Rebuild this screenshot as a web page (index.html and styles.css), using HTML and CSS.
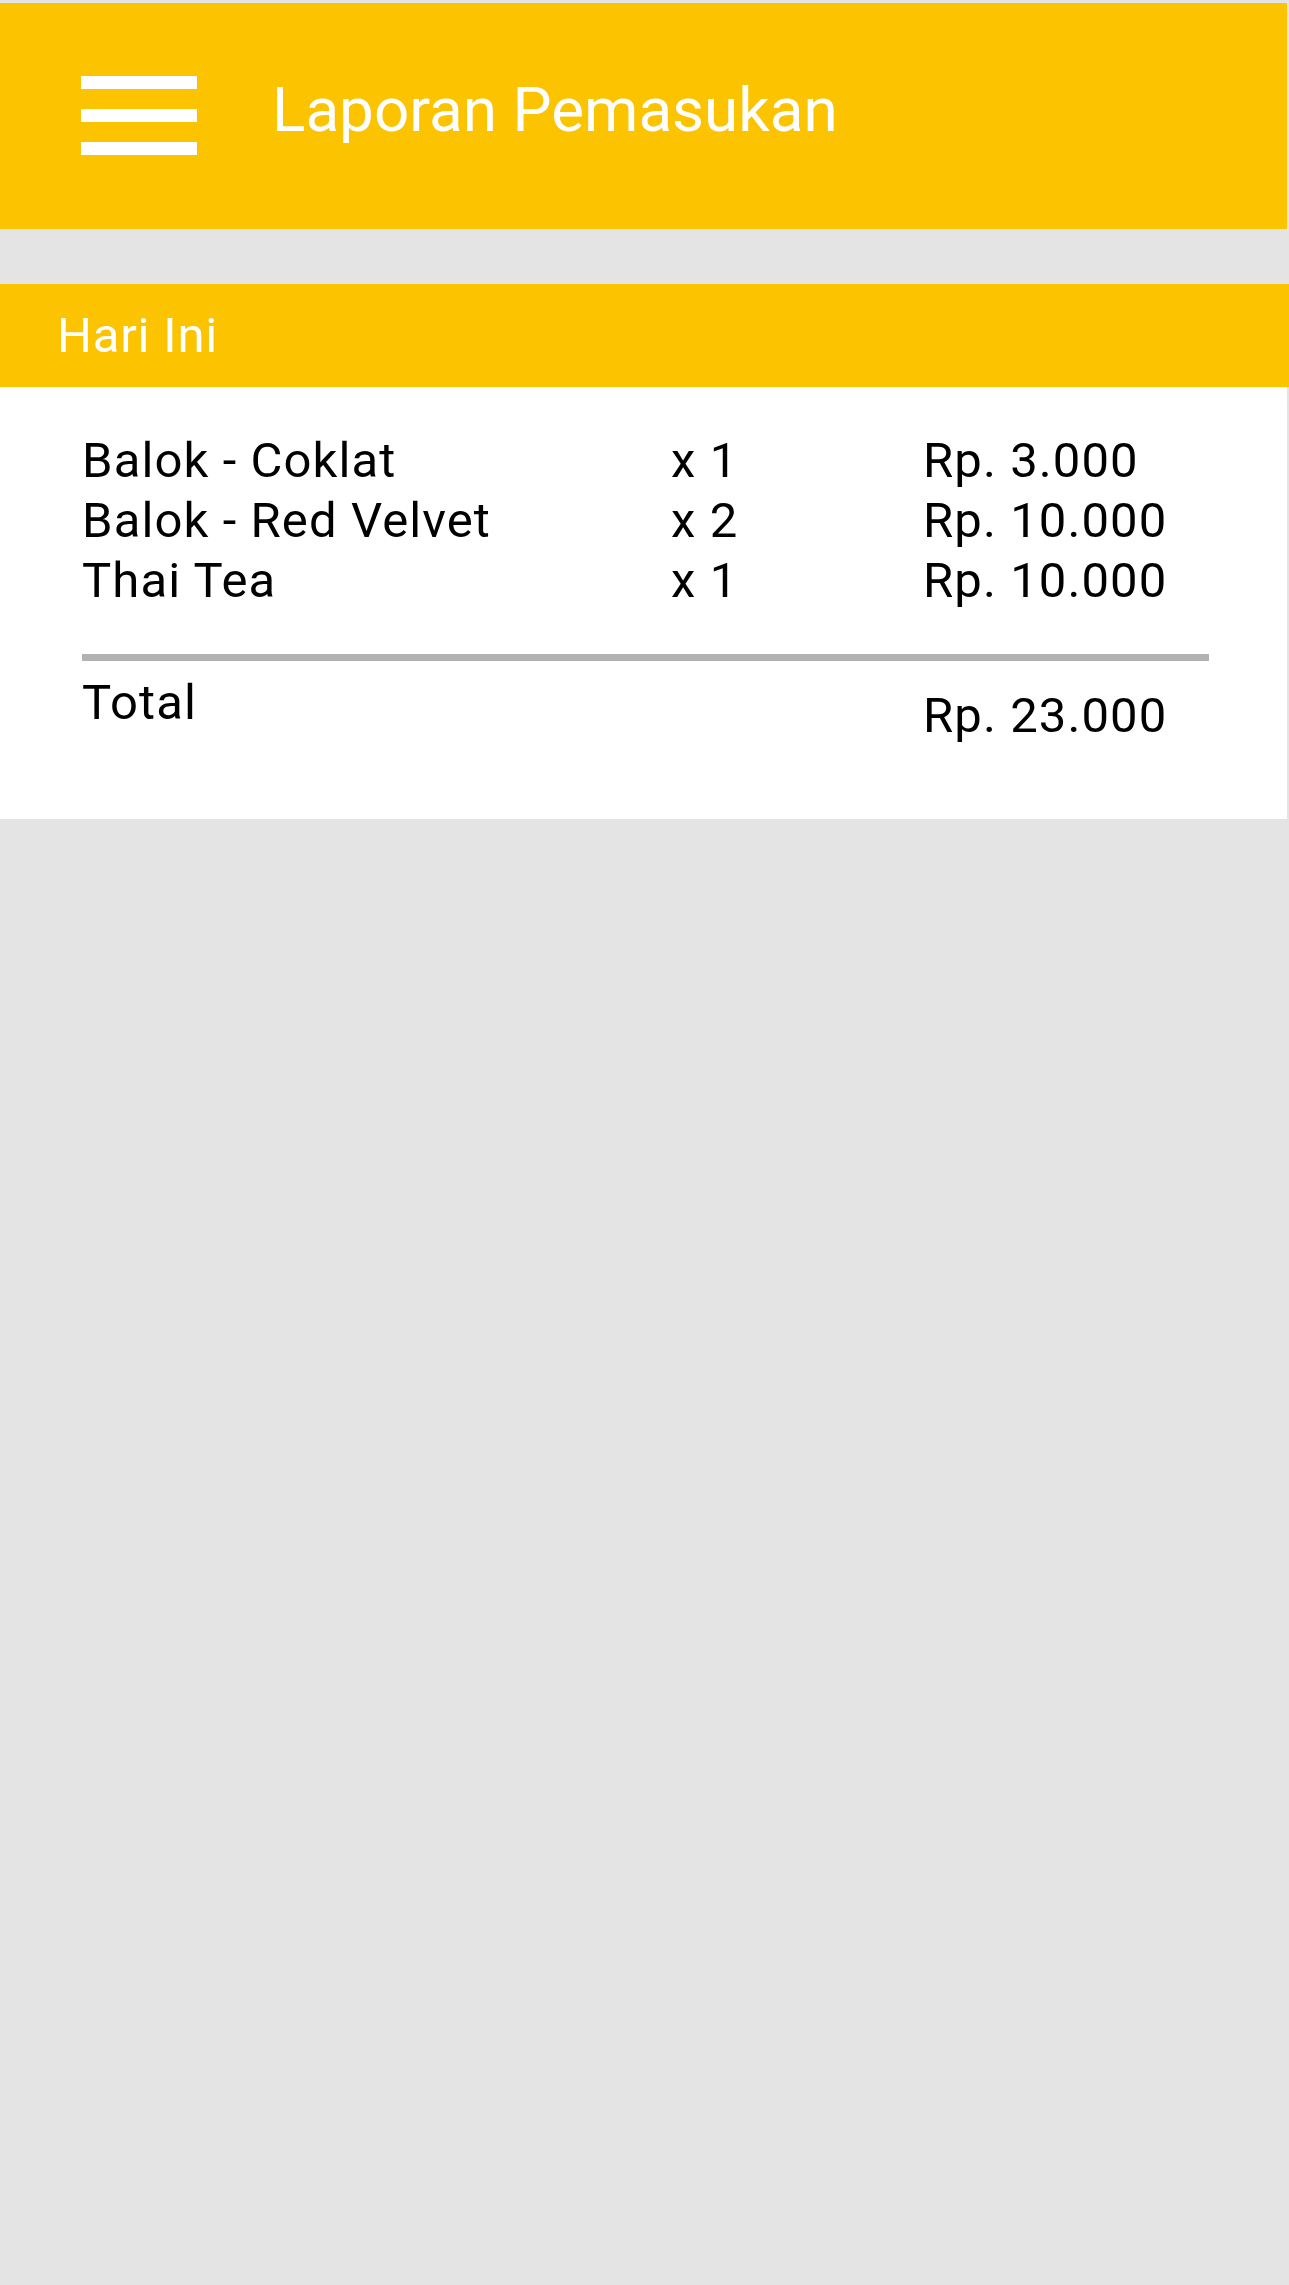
FILE: index.html
```html
<!DOCTYPE html>
<html lang="id">
<head>
<meta charset="utf-8">
<title>Laporan Pemasukan</title>
<link rel="stylesheet" href="styles.css">
</head>
<body>
<div class="page">
  <header class="appbar">
    <div class="menu" aria-label="Menu">
      <span class="bar"></span>
      <span class="bar"></span>
      <span class="bar"></span>
    </div>
    <h1 class="title">Laporan Pemasukan</h1>
  </header>

  <section class="report">
    <h2 class="section-title">Hari Ini</h2>
    <div class="card">
      <div class="items">
        <div class="row">
          <span class="name">Balok - Coklat</span>
          <span class="qty">x 1</span>
          <span class="price">Rp. 3.000</span>
        </div>
        <div class="row">
          <span class="name">Balok - Red Velvet</span>
          <span class="qty">x 2</span>
          <span class="price">Rp. 10.000</span>
        </div>
        <div class="row">
          <span class="name">Thai Tea</span>
          <span class="qty">x 1</span>
          <span class="price">Rp. 10.000</span>
        </div>
      </div>
      <div class="divider"></div>
      <div class="row total">
        <span class="name">Total</span>
        <span class="qty"></span>
        <span class="price total-price">Rp. 23.000</span>
      </div>
    </div>
  </section>
</div>
</body>
</html>
```

FILE: styles.css
```css
* {
  box-sizing: border-box;
}

html, body {
  margin: 0;
  padding: 0;
}

body {
  background: #e4e4e4;
  font-family: Roboto, "Noto Sans", "Liberation Sans", sans-serif;
  color: #000;
  width: 1289px;
  min-height: 2285px;
}

.page {
  padding-top: 3px;
  display: flex;
  flex-direction: column;
}

.appbar {
  width: 1287px;
  height: 226px;
  background: #fcc300;
  display: flex;
  align-items: flex-start;
  padding: 73px 0 0 81px;
}

.menu {
  width: 116px;
  display: flex;
  flex-direction: column;
  gap: 20px;
}

.bar {
  display: block;
  height: 13px;
  background: #fff;
}

.title {
  margin: 3px 0 0 75px;
  font-size: 62px;
  font-weight: 400;
  line-height: 1;
  color: #fff;
}

.report {
  margin-top: 55px;
  display: flex;
  flex-direction: column;
}

.section-title {
  margin: 0;
  height: 103px;
  background: #fcc300;
  color: #fff;
  font-size: 49px;
  font-weight: 400;
  line-height: 1;
  letter-spacing: 0.8px;
  padding: 27px 0 0 57px;
}

.card {
  width: 1287px;
  background: #fff;
  padding: 44px 78px 73px 82px;
}

.row {
  display: grid;
  grid-template-columns: 589px 252px 1fr;
  font-size: 49px;
  line-height: 60px;
  letter-spacing: 1.1px;
}

.divider {
  margin-top: 43px;
  height: 7px;
  background: #b2b2b2;
}

.total {
  margin-top: 12px;
}

.total-price {
  padding-top: 13px;
}
```
